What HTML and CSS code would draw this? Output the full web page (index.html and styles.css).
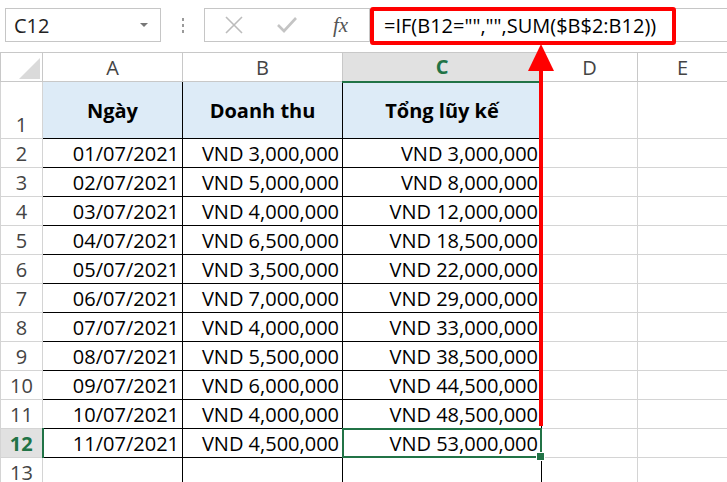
FILE: index.html
```html
<!DOCTYPE html>
<html lang="vi">

<head>
    <meta charset="UTF-8">
    <meta name="viewport" content="width=device-width, initial-scale=1.0">
    <title>Tổng lũy kế</title>
    <link rel="stylesheet" href="styles.css">
</head>

<body>
    <div class="bar">
        <div class="namebox">
            <span>C12</span>
            <i class="drop"></i>
        </div>
        <div class="dots"><b></b><b></b><b></b></div>
        <div class="tools">
            <svg width="20" height="18" viewBox="0 0 20 18">
                <path d="M2 1 L18 17 M18 1 L2 17" stroke="#bcbcbc" stroke-width="1.6" fill="none" />
            </svg>
            <svg width="20" height="16" viewBox="0 0 20 16">
                <path d="M1 8 L7 14 L19 1" stroke="#c4c4c4" stroke-width="2.6" fill="none" />
            </svg>
            <span class="fx">fx</span>
        </div>
        <div class="formula">
            <span class="mark">=IF(B12="","",SUM($B$2:B12))</span>
        </div>
    </div>

    <div class="sheet">
        <table class="grid">
            <colgroup>
                <col style="width:42px">
                <col style="width:140px">
                <col style="width:160px">
                <col style="width:199px">
                <col style="width:96px">
                <col style="width:90px">
            </colgroup>
            <tr class="cols">
                <th class="corner"><i></i></th>
                <th>A</th>
                <th>B</th>
                <th class="on">C</th>
                <th>D</th>
                <th>E</th>
            </tr>
            <tr class="head">
                <th class="num">1</th>
                <td class="t">Ngày</td>
                <td class="t">Doanh thu</td>
                <td class="t">Tổng lũy kế</td>
                <td></td>
                <td></td>
            </tr>
            <tr>
                <th class="num">2</th>
                <td class="t">01/07/2021</td>
                <td class="t">VND 3,000,000</td>
                <td class="t">VND 3,000,000</td>
                <td></td>
                <td></td>
            </tr>
            <tr>
                <th class="num">3</th>
                <td class="t">02/07/2021</td>
                <td class="t">VND 5,000,000</td>
                <td class="t">VND 8,000,000</td>
                <td></td>
                <td></td>
            </tr>
            <tr>
                <th class="num">4</th>
                <td class="t">03/07/2021</td>
                <td class="t">VND 4,000,000</td>
                <td class="t">VND 12,000,000</td>
                <td></td>
                <td></td>
            </tr>
            <tr>
                <th class="num">5</th>
                <td class="t">04/07/2021</td>
                <td class="t">VND 6,500,000</td>
                <td class="t">VND 18,500,000</td>
                <td></td>
                <td></td>
            </tr>
            <tr>
                <th class="num">6</th>
                <td class="t">05/07/2021</td>
                <td class="t">VND 3,500,000</td>
                <td class="t">VND 22,000,000</td>
                <td></td>
                <td></td>
            </tr>
            <tr>
                <th class="num">7</th>
                <td class="t">06/07/2021</td>
                <td class="t">VND 7,000,000</td>
                <td class="t">VND 29,000,000</td>
                <td></td>
                <td></td>
            </tr>
            <tr>
                <th class="num">8</th>
                <td class="t">07/07/2021</td>
                <td class="t">VND 4,000,000</td>
                <td class="t">VND 33,000,000</td>
                <td></td>
                <td></td>
            </tr>
            <tr>
                <th class="num">9</th>
                <td class="t">08/07/2021</td>
                <td class="t">VND 5,500,000</td>
                <td class="t">VND 38,500,000</td>
                <td></td>
                <td></td>
            </tr>
            <tr>
                <th class="num">10</th>
                <td class="t">09/07/2021</td>
                <td class="t">VND 6,000,000</td>
                <td class="t">VND 44,500,000</td>
                <td></td>
                <td></td>
            </tr>
            <tr>
                <th class="num">11</th>
                <td class="t">10/07/2021</td>
                <td class="t">VND 4,000,000</td>
                <td class="t">VND 48,500,000</td>
                <td></td>
                <td></td>
            </tr>
            <tr>
                <th class="num on">12</th>
                <td class="t">11/07/2021</td>
                <td class="t">VND 4,500,000</td>
                <td class="t sel">VND 53,000,000</td>
                <td></td>
                <td></td>
            </tr>
            <tr>
                <th class="num">13</th>
                <td class="side"></td>
                <td class="side"></td>
                <td class="side"></td>
                <td></td>
                <td></td>
            </tr>
        </table>

        <!-- mũi tên đỏ chỉ lên công thức -->
        <svg class="arrow" width="30" height="384" viewBox="0 0 30 384">
            <polygon points="15,0 28,27 2,27" fill="#f00" />
            <rect x="13" y="20" width="4" height="362" fill="#f00" />
        </svg>
    </div>
</body>

</html>
```

FILE: styles.css
```css
* {
    margin: 0;
    padding: 0;
    box-sizing: border-box;
}

body {
    width: 727px;
    height: 482px;
    overflow: hidden;
    background: #fff;
    font-family: "Open Sans", "Liberation Sans", sans-serif;
    font-size: 20px;
    color: #000;
    position: relative;
}

.bar {
    height: 52px;
    display: flex;
    align-items: flex-start;
    padding-top: 8px;
}

.namebox {
    width: 156px;
    height: 34px;
    margin-left: 5px;
    border: 1px solid #c6c6c6;
    display: flex;
    align-items: center;
    justify-content: space-between;
    padding: 0 12px 0 8px;
    color: #222;
}

.namebox .drop {
    width: 0;
    height: 0;
    border-left: 4px solid transparent;
    border-right: 4px solid transparent;
    border-top: 4px solid #777;
}

.dots {
    width: 43px;
    height: 34px;
    display: flex;
    flex-direction: column;
    align-items: center;
    justify-content: center;
    gap: 3px;
}

.dots b {
    width: 2px;
    height: 3px;
    background: #9a9a9a;
}

.tools {
    width: 166px;
    height: 34px;
    border: 1px solid #c6c6c6;
    display: flex;
    align-items: center;
    padding-left: 19px;
    gap: 33px;
}

.tools .fx {
    font-family: "Liberation Serif", serif;
    font-style: italic;
    font-size: 21px;
    color: #555;
    margin-left: 3px;
}

.formula {
    flex: 1;
    height: 34px;
    margin-left: 2px;
    border: 1px solid #c6c6c6;
    border-right: none;
    position: relative;
}

.formula .mark {
    position: absolute;
    left: -3px;
    top: -2px;
    width: 306px;
    height: 38px;
    border: 4px solid #f00;
    border-radius: 3px;
    padding-left: 10px;
    line-height: 29px;
    white-space: nowrap;
    background: #fff;
}

.sheet {
    position: relative;
}

.grid {
    table-layout: fixed;
    width: 727px;
    border-collapse: collapse;
}

.grid th,
.grid td {
    border: 1px solid #d4d4d4;
    height: 29px;
    padding: 0 3px;
    white-space: nowrap;
    overflow: hidden;
    font-weight: normal;
}

.cols th {
    color: #444;
    text-align: center;
    border-color: #c8c8c8;
}

.cols th.on {
    background: #e1e1e1;
    color: #217346;
    font-weight: bold;
    border-bottom: 2px solid #217346;
}

.corner {
    position: relative;
}

.corner i {
    position: absolute;
    right: 2px;
    bottom: 2px;
    width: 0;
    height: 0;
    border-left: 21px solid transparent;
    border-bottom: 21px solid #dadada;
}

.num {
    color: #444;
    text-align: center;
    vertical-align: bottom;
    line-height: 26px;
    border-color: #c8c8c8;
}

.num.on {
    background: #e1e1e1;
    color: #217346;
    font-weight: bold;
    border-right: 2px solid #217346;
}

.grid td.t {
    border: 1px solid #000;
    text-align: right;
    vertical-align: bottom;
    line-height: 27px;
}

.grid td.side {
    border-left: 1px solid #000;
    border-right: 1px solid #000;
}

.head td.t {
    height: 57px;
    background: #ddebf7;
    font-weight: bold;
    text-align: center;
    vertical-align: middle;
}

.head th {
    height: 57px;
}

.grid td.sel {
    position: relative;
    overflow: visible;
}

.grid td.sel::after {
    content: "";
    position: absolute;
    left: -1px;
    top: -1px;
    right: -1px;
    bottom: -1px;
    border: 2px solid #217346;
}

.grid td.sel::before {
    content: "";
    position: absolute;
    right: -4px;
    bottom: -4px;
    width: 7px;
    height: 7px;
    background: #217346;
    border: 1px solid #fff;
    z-index: 1;
}

.arrow {
    position: absolute;
    left: 526px;
    top: -8px;
}
```
